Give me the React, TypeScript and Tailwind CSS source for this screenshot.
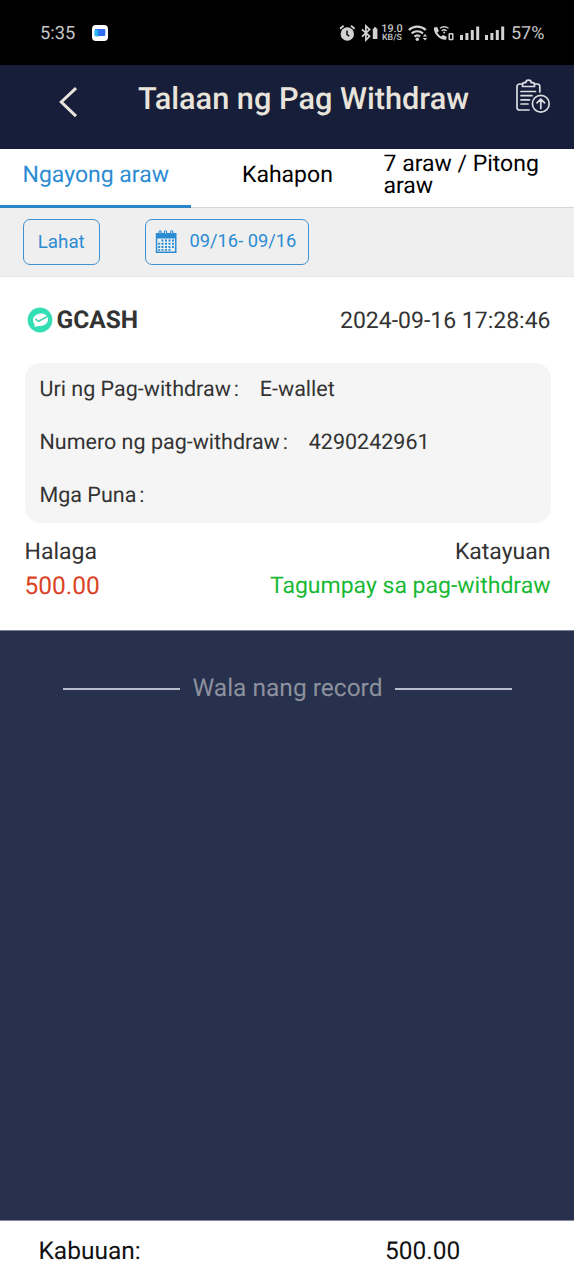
import React from "react";

function SignalBars() {
  return (
    <svg width="20" height="16" viewBox="0 0 20 16" fill="#d2d2d2">
      <rect x="0" y="10" width="3" height="5" />
      <rect x="5.4" y="8" width="3" height="7" />
      <rect x="10.8" y="5" width="3" height="10" />
      <rect x="16.2" y="1.500" width="3" height="13.500" />
    </svg>
  );
}

function StatusBar() {
  return (
    <div className="flex h-[65px] items-center bg-black pl-10 text-[#c8c8c8]">
      <span className="w-[52px] pt-0.5 text-[18.3px] leading-6">5:35</span>
      <span className="flex size-4 items-center justify-center rounded-[4px] bg-white">
        <svg width="12" height="8" viewBox="0 0 12 8">
          <rect x="0.8" y="0" width="10.5" height="7" rx="1" fill="#2f6df0" />
          <path d="M1 1h3.2v6.5H2A1.5 1.5 0 0 1 .6 6V2z" fill="#27b9f7" />
        </svg>
      </span>
      <div className="ml-[231px] flex items-center">
        <svg className="shrink-0" width="17" height="18" viewBox="0 0 17 18">
          <circle cx="8.300" cy="10" r="6.700" fill="#d2d2d2" />
          <path d="M1 4.800 4.600 1.800M12 1.800l3.600 3" stroke="#d2d2d2" strokeWidth="1.800" />
          <path d="M8 6.500v4l2.200 1.600" fill="none" stroke="#000" strokeWidth="1.400" />
        </svg>
        <svg className="ml-[5px] shrink-0" width="17" height="18" viewBox="0 0 17 18">
          <path d="M1 5.300l7.600 7L4.900 16V2l3.700 3.600L1 12.700" fill="none" stroke="#d2d2d2" strokeWidth="1.700" />
          <path d="M11.800 4.500h1.200V3.200h2.200v1.300h1.200V15h-4.600z" fill="#d2d2d2" />
        </svg>
        <div className="ml-1 flex w-5 shrink-0 flex-col items-center gap-px whitespace-nowrap">
          <span className="h-[9px] text-[10.800px] font-medium leading-[9px]">19.0</span>
          <span className="h-2 text-[8.800px] font-medium leading-[8px]">KB/S</span>
        </div>
        <svg className="ml-1.5 shrink-0" width="21" height="18" viewBox="0 0 21 18">
          <g fill="none" stroke="#d2d2d2" strokeWidth="2.200">
            <path d="M.8 6a12.500 12.500 0 0 1 17 0" />
            <path d="M3.700 9.400a8.300 8.300 0 0 1 11.200 0" />
            <path d="M6.500 12.600a4.200 4.200 0 0 1 5.600 0" />
          </g>
          <circle cx="9.300" cy="15.200" r="1.700" fill="#d2d2d2" />
          <path d="M14.800 12.500 17 10l2.200 2.500zM14.800 14h4.400L17 16.500z" fill="#d2d2d2" />
        </svg>
        <svg className="ml-1 shrink-0" width="22" height="18" viewBox="0 0 22 18">
          <path d="M1 3.500 4.200 3l1.700 3.900-1.600 1.700c1 1.900 2 3 3.900 4l1.800-1.600 3.700 1.800-.6 3C7 16.500 0 9.500 1 3.500z" fill="#d2d2d2" />
          <path d="M7 4.300a7 7 0 0 1 8.500 0M8.700 6.700a4.200 4.200 0 0 1 5 0" fill="none" stroke="#d2d2d2" strokeWidth="1.400" />
          <circle cx="11.200" cy="8.600" r="1" fill="#d2d2d2" />
          <rect x="16.200" y="9.700" width="3.600" height="5.700" rx="0.500" fill="none" stroke="#d2d2d2" strokeWidth="1.500" />
        </svg>
        <div className="ml-[5px] flex gap-[5px]">
          <SignalBars />
          <SignalBars />
        </div>
        <span className="ml-1.5 whitespace-nowrap pt-0.5 text-[18px] leading-6">57%</span>
      </div>
    </div>
  );
}

function Header() {
  return (
    <div className="flex h-[84px] bg-[#161e3a] pl-[59px] text-[#e9e4db]">
      <svg className="mt-[21px] shrink-0" width="20" height="32" viewBox="0 0 20 32">
        <path d="M17 2.200 2.300 16 17 30.200" fill="none" stroke="#e9e4db" strokeWidth="3" />
      </svg>
      <h1 className="ml-[59px] mt-[17px] w-[332px] whitespace-nowrap text-[30.700px] font-medium leading-9">
        Talaan ng Pag Withdraw
      </h1>
      <svg className="ml-[45px] mt-[13px] shrink-0" width="37" height="38" viewBox="0 0 37 38" fill="none" stroke="#dcdee3" strokeWidth="1.700" strokeLinecap="round" strokeLinejoin="round">
        <path d="M7.500 6H4.500A2.500 2.500 0 0 0 2 8.500v21A2.500 2.500 0 0 0 4.500 32H14" />
        <path d="M19.500 6h2.800a2.500 2.500 0 0 1 2.500 2.500v5.500" />
        <path d="M7.500 8.500V6.200a1.600 1.600 0 0 1 1.600-1.500h1.700c0-3.500 5.400-3.500 5.400 0h1.700a1.600 1.600 0 0 1 1.600 1.500v2.300z" />
        <path d="M6 13.500h14.500M6 17.700h11M6 21.900h8.500M6 26h7" />
        <circle cx="25.800" cy="25.700" r="8.400" />
        <path d="M25.800 30.500v-9.300M22 24.900l3.800-3.900 3.800 3.900" />
      </svg>
    </div>
  );
}

function Tabs() {
  return (
    <div className="flex h-[59px] border-b border-[#d4d6d6] bg-white text-[23px] leading-[22px] text-black">
      <div className="-mb-px w-[191px] whitespace-nowrap border-b-[3px] border-[#2a86c9] pl-[22.500px] pt-[15px] text-[#2b8cd4]">
        Ngayong araw
      </div>
      <div className="w-[192.500px] pl-[51px] pt-[15px]">Kahapon</div>
      <div className="w-[180px] pt-1">7 araw / Pitong araw</div>
    </div>
  );
}

function CalendarIcon() {
  return (
    <svg width="22" height="24" viewBox="0 0 22 24">
      <path d="M0.800 3h2.700V1.800a1.600 1.600 0 0 1 3.200 0V3h2.200V1.800a1.600 1.600 0 0 1 3.200 0V3h3V1.800a1.600 1.600 0 0 1 3.200 0V3H21.500v20H.8z" fill="#2b8cd4" />
      <rect x="2.300" y="8.500" width="17.700" height="13" fill="#eef1f3" />
      <g fill="#2b8cd4">
        <path d="M6.500 9.500h2v2h-2zM10 9.500h2v2h-2zM13.500 9.500h2v2h-2zM17 9.500h2v2h-2z" />
        <path d="M3.200 12.700h2v2h-2zM6.500 12.700h2v2h-2zM10 12.700h2v2h-2zM13.500 12.700h2v2h-2zM17 12.700h2v2h-2z" />
        <path d="M3.200 15.900h2v2h-2zM6.500 15.900h2v2h-2zM10 15.900h2v2h-2zM13.500 15.900h2v2h-2zM17 15.900h2v2h-2z" />
        <path d="M3.200 19h2v1.700h-2zM6.500 19h2v1.700h-2zM10 19h2v1.700h-2zM13.500 19h2v1.700h-2z" />
      </g>
      <path d="M5 1.200v2.300M10.500 1.200v2.300M16.700 1.200v2.300" stroke="#eef1f3" strokeWidth="0.900" />
    </svg>
  );
}

function Filters() {
  return (
    <div className="flex h-[69px] gap-[45px] border-b border-[#e7e7e7] bg-[#efefef] pl-[22.500px] pt-[10.500px] text-[#2b8cd4]">
      <button className="flex h-[46px] w-[77.500px] items-center justify-center rounded-[7px] border border-[#3f92d2] pt-0.5 text-[18.800px]">
        Lahat
      </button>
      <button className="flex h-[46px] w-[164px] items-center whitespace-nowrap rounded-[7px] border border-[#3f92d2] pl-[8.500px]">
        <CalendarIcon />
        <span className="ml-[13px] pb-px text-[18.300px]">09/16- 09/16</span>
      </button>
    </div>
  );
}

const details = [
  { label: "Uri ng Pag-withdraw", value: "E-wallet" },
  { label: "Numero ng pag-withdraw", value: "4290242961" },
  { label: "Mga Puna", value: "" },
];

function RecordCard() {
  return (
    <div className="h-[353px] bg-white pl-[24.500px] pr-[23.500px] text-[#333333]">
      <div className="flex h-[86px] items-center pl-[2.500px]">
        <svg width="26" height="26" viewBox="0 0 26 26">
          <circle cx="13" cy="13" r="12.400" fill="#35dfb5" />
          <path d="M7 16.500c-3-4.500 1-10 7-10 4.500 0 7 2.500 7 6s-3.500 6.500-8 6.500c-2 0-3.500 .300-5.500 1.300.6-1.500.4-2.600-.5-3.800z" fill="#fff" />
          <path d="m8.300 12 3.200 2.400 9-5" fill="none" stroke="#35cfae" strokeWidth="1.400" />
        </svg>
        <span className="ml-[3.500px] text-[24.500px] font-bold">GCASH</span>
        <span className="ml-auto whitespace-nowrap pt-0.5 text-[23px]">2024-09-16 17:28:46</span>
      </div>
      <div className="flex h-40 w-[526px] flex-col rounded-2xl bg-[#f5f5f5] pl-[15px] text-[21.500px]">
        {details.map((row) => (
          <div key={row.label} className="flex h-[53.800px] items-center whitespace-nowrap">
            <span>{row.label}</span>
            <span className="ml-[3px] w-[26px] shrink-0">:</span>
            <span>{row.value}</span>
          </div>
        ))}
      </div>
      <div className="mt-3 flex h-[34px] items-center justify-between text-[23px]">
        <span>Halaga</span>
        <span>Katayuan</span>
      </div>
      <div className="flex h-[35px] items-center justify-between whitespace-nowrap">
        <span className="text-[24.500px] text-[#dc4326]">500.00</span>
        <span className="text-[23px] text-[#18b935]">Tagumpay sa pag-withdraw</span>
      </div>
    </div>
  );
}

export default function App() {
  return (
    <div className="flex h-[1280px] w-[574px] flex-col overflow-hidden bg-[#27304d] font-['Roboto','Liberation_Sans',sans-serif] [text-rendering:geometricPrecision]">
      <StatusBar />
      <Header />
      <Tabs />
      <Filters />
      <RecordCard />
      <div className="flex flex-1 items-start justify-center border-t border-[#7a8093] pt-[39px]">
        <div className="flex h-9 items-center gap-3 whitespace-nowrap pl-px text-[24.500px] text-[#8d919e]">
          <span className="mt-0.5 h-0.5 w-[117px] bg-[#b9bdcb]" />
          <span>Wala nang record</span>
          <span className="mt-0.5 h-0.5 w-[117px] bg-[#b9bdcb]" />
        </div>
      </div>
      <div className="flex h-[60px] items-center border-t border-[#85899a] bg-white pl-[38.500px] pt-px text-[24.500px] text-[#111111]">
        <span className="w-[346.500px]">Kabuuan:</span>
        <span>500.00</span>
      </div>
    </div>
  );
}
